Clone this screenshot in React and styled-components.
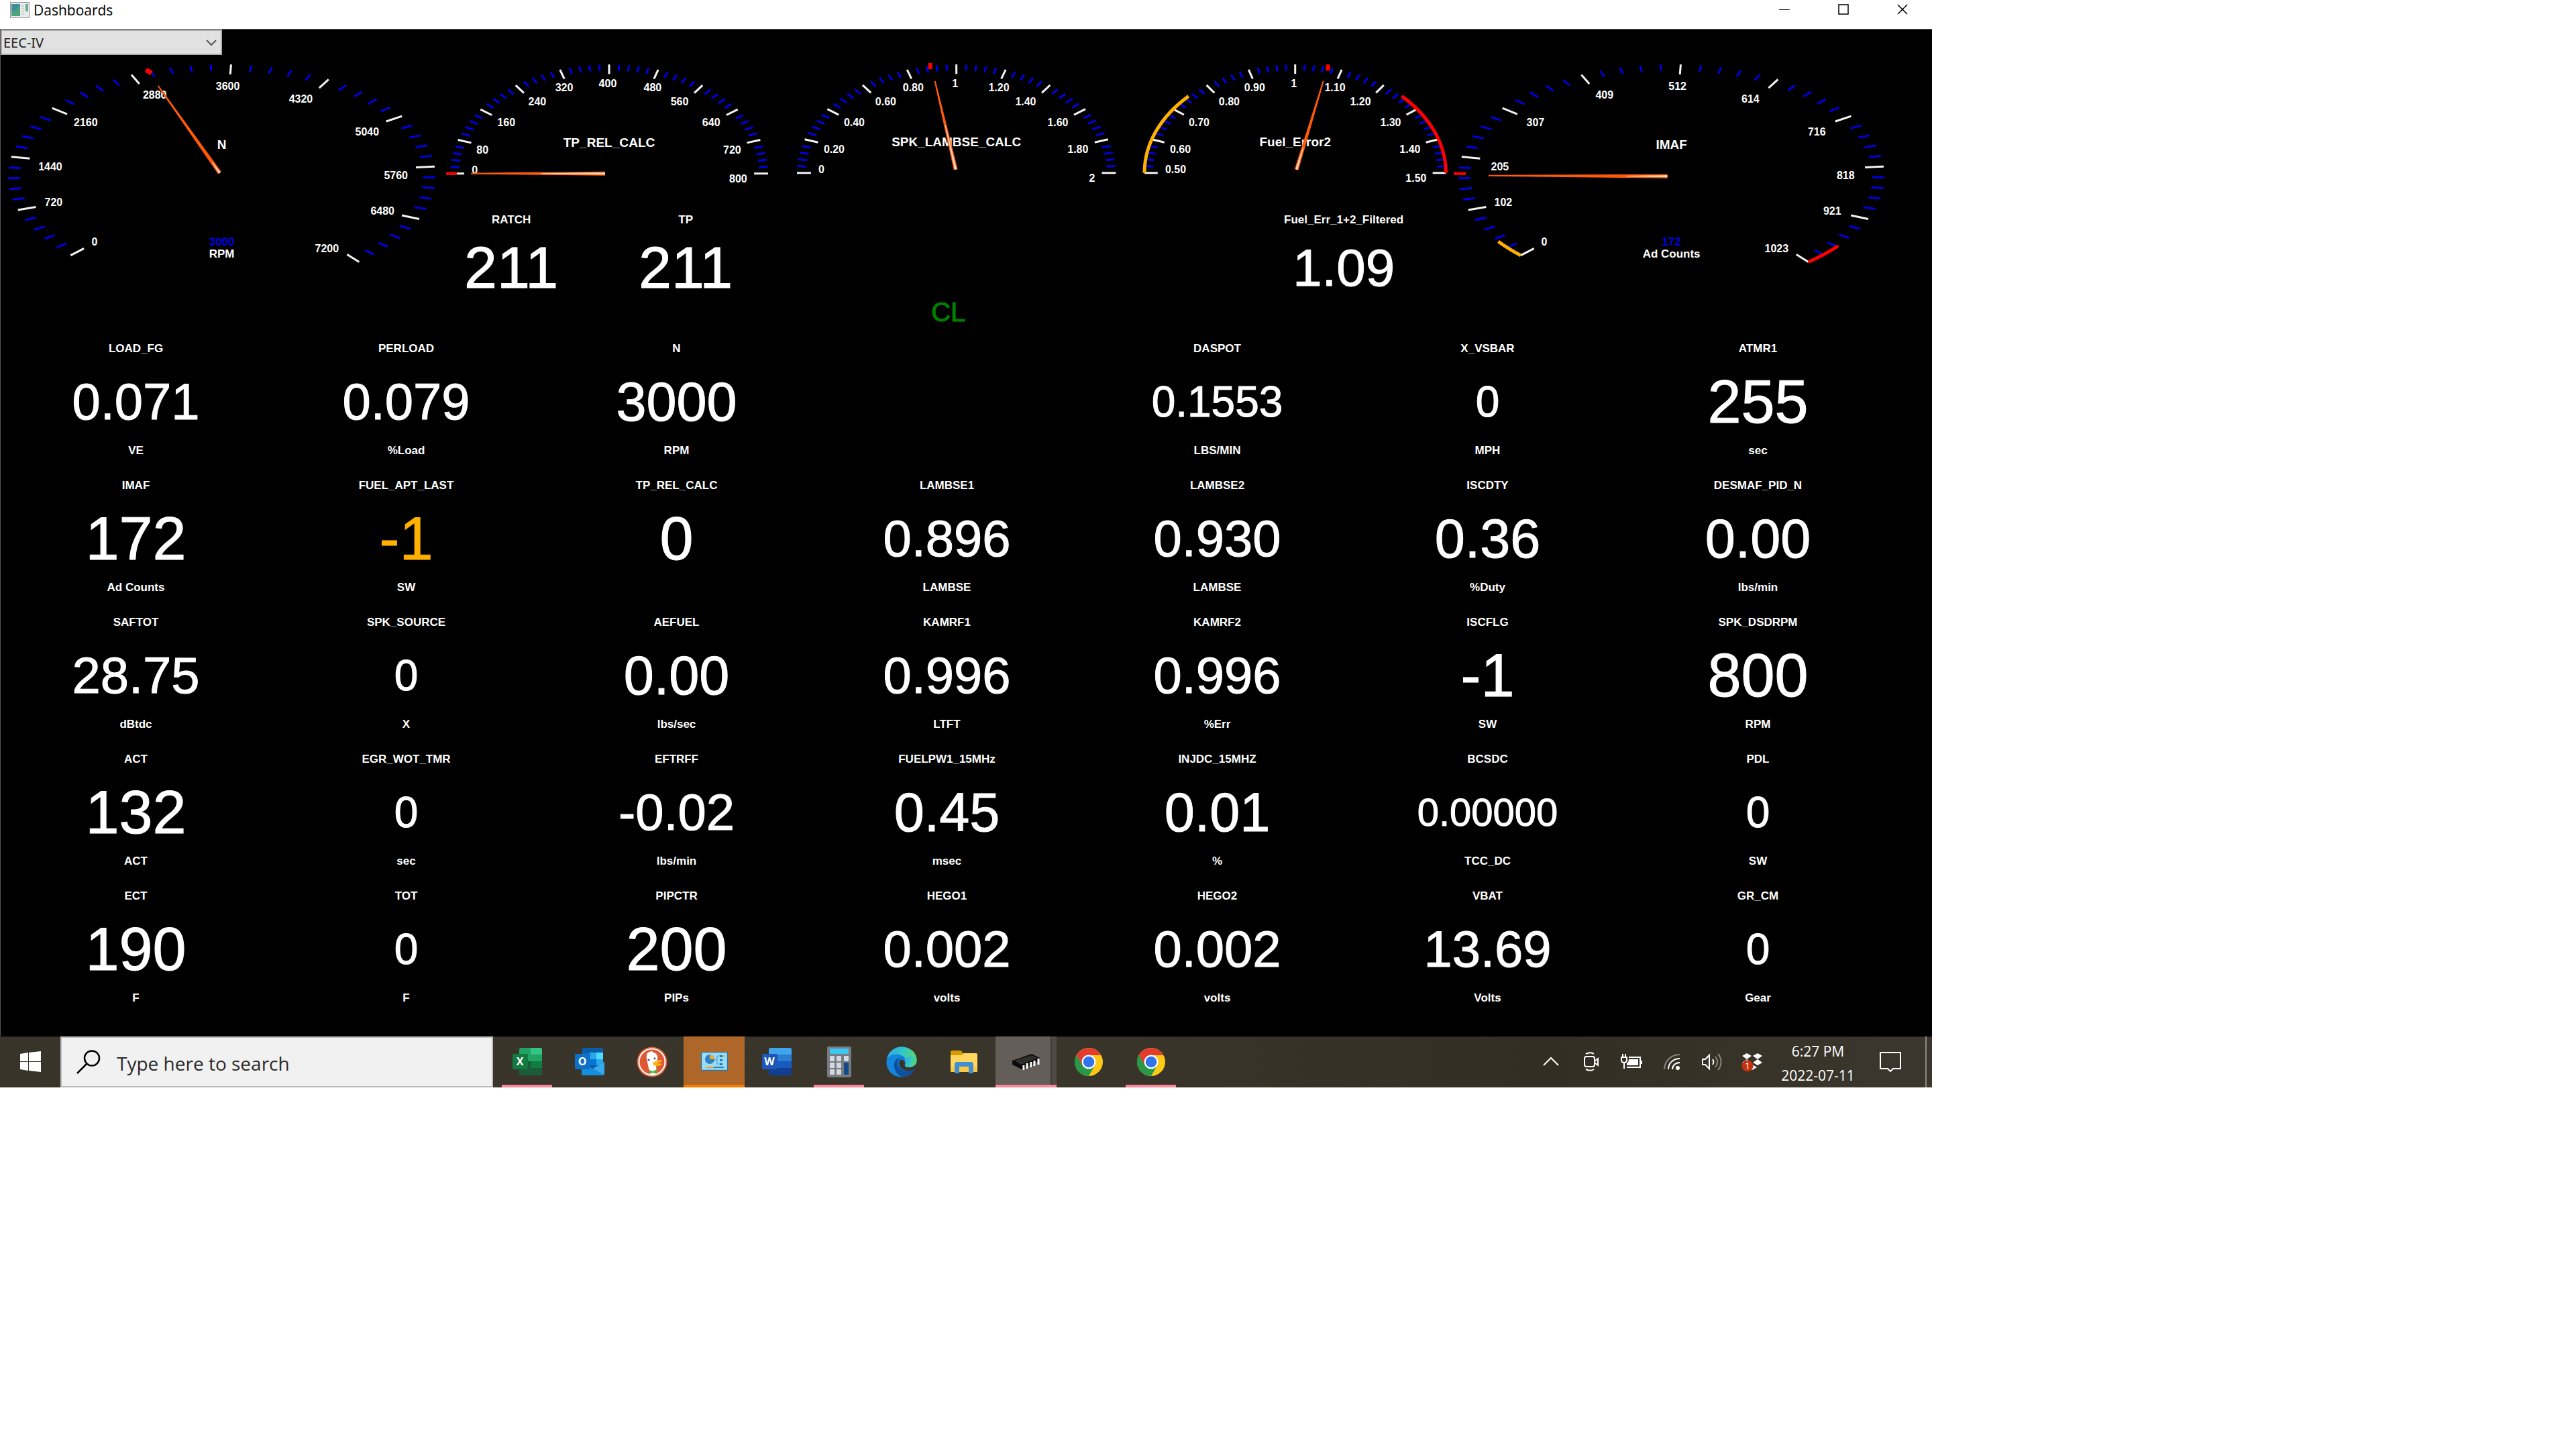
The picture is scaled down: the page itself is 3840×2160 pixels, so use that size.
import { useState } from "react";
import styled, { createGlobalStyle } from "styled-components";

const GlobalStyle = createGlobalStyle`
  * {
    box-sizing: border-box;
  }

  body {
    margin: 0;
    background: #fff;
  }
`;

const uiFont = `"Open Sans", "Noto Sans", sans-serif`;
const gaugeFont = `"Liberation Sans", Arial, sans-serif`;

const Desktop = styled.div`
  width: 75vw;
  font-family: ${uiFont};
`;

const TitleBar = styled.header`
  display: flex;
  align-items: flex-start;
  height: 43px;
  padding-left: 15px;
  background: #fff;
`;

const AppTitle = styled.h1`
  display: flex;
  align-items: center;
  gap: 6px;
  flex: 1;
  margin: 0;
  height: 30px;
  font-size: 21px;
  line-height: 30px;
  font-weight: 400;
  color: #000;
`;

const WindowButton = styled.button`
  display: flex;
  align-items: center;
  justify-content: center;
  width: 88px;
  height: 28px;
  padding: 0;
  border: 0;
  background: transparent;
  color: #000;
`;

const Dashboard = styled.main`
  padding-bottom: 48px;
  border-top: 1px solid #5a5f5a;
  border-left: 1px solid #555;
  background: #000;
  color: #fff;
  font-family: ${gaugeFont};
`;

const Picker = styled.div`
  position: relative;
  width: 330px;
  height: 38px;

  svg {
    position: absolute;
    top: 15px;
    right: 8px;
    pointer-events: none;
  }
`;

const PickerSelect = styled.select`
  width: 100%;
  height: 100%;
  padding: 0 32px 0 2px;
  appearance: none;
  border: 2px solid #adadad;
  border-radius: 0;
  background: #e1e1e1;
  color: #222;
  font-family: "Noto Sans", sans-serif;
  font-size: 20px;
`;

const GaugeRow = styled.section`
  display: grid;
  grid-template-columns: 662fr 494fr 538fr 472fr 656fr;
  grid-template-rows: auto 192px;
  margin-right: 58px;
`;

const GaugeCell = styled.div`
  grid-row: ${(p) => (p.$tall ? "1 / span 2" : "1")};
  min-width: 0;
`;

const GaugeSvg = styled.svg`
  display: block;
  width: 100%;
  height: auto;
  font-family: ${gaugeFont};
  font-weight: 700;
`;

const ReadoutStrip = styled.div`
  grid-row: 2;
  grid-column: ${(p) => p.$column};
  display: flex;
  justify-content: center;
  align-items: ${(p) => (p.$end ? "flex-end" : "flex-start")};
  gap: 60px;
  padding: ${(p) => p.$pad};
`;

const Readout = styled.div`
  width: 200px;
`;

const LoopState = styled.p`
  margin: 0;
  font-size: 40px;
  line-height: 48px;
  color: #008000;
  -webkit-text-stroke: 1px currentColor;
`;

const ReadingGrid = styled.section`
  display: grid;
  grid-template-columns: repeat(7, 1fr);
  row-gap: 32px;
  margin-right: 58px;
`;

const Reading = styled.div`
  min-width: 0;
`;

const Caption = styled.div`
  height: 20px;
  font-size: 17px;
  line-height: 22px;
  font-weight: 700;
  text-align: center;
  white-space: nowrap;
`;

const Value = styled.div`
  height: ${(p) => (p.$short ? "124px" : "132px")};
  padding-top: ${(p) => (p.$short ? "0" : "6px")};
  font-size: ${(p) => p.$size}px;
  line-height: ${(p) => (p.$short ? "124px" : "128px")};
  color: ${(p) => (p.$warn ? "#ffb000" : "#fff")};
  text-align: center;
  white-space: nowrap;
  -webkit-text-stroke: 1px currentColor;
`;

const Taskbar = styled.footer`
  display: flex;
  height: 76px;
  background: linear-gradient(90deg, #38342a, #3a352b 55%, #332e23 80%, #3b372e);
  box-shadow: inset 0 1px 0 #26221c;
`;

const StartButton = styled.button`
  display: flex;
  align-items: center;
  justify-content: center;
  width: 90px;
  padding: 0;
  border: 0;
  background: transparent;
`;

const SearchBox = styled.label`
  display: flex;
  align-items: center;
  gap: 24px;
  width: 645px;
  padding-left: 22px;
  border: 2px solid #bcbcbc;
  background: #f1f1f1;
`;

const SearchInput = styled.input`
  flex: 1;
  min-width: 0;
  padding: 4px 0 0;
  border: 0;
  outline: 0;
  background: transparent;
  font-family: ${uiFont};
  font-size: 28px;

  &::placeholder {
    color: #2b2b2b;
    opacity: 1;
  }
`;

const TaskList = styled.nav`
  display: flex;
  gap: 2px;
  flex: 1;
  margin-left: 5px;
`;

const taskBackground = {
  alert: "#ae6629",
  active: "linear-gradient(90deg, #635f58 82px, #3f3b35 82px 84px, #4f4a44 84px)",
};

const TaskButton = styled.button`
  position: relative;
  display: flex;
  align-items: center;
  justify-content: center;
  width: 91px;
  padding: 0;
  border: 0;
  background: ${(p) => taskBackground[p.$state] || "transparent"};

  &::after {
    content: "";
    position: absolute;
    right: ${(p) => (p.$state === "open" ? "8px" : "0")};
    bottom: 0;
    left: ${(p) => (p.$state === "open" ? "8px" : "0")};
    height: ${(p) => (p.$state ? "4px" : "0")};
    background: ${(p) => (p.$state === "alert" ? "#ff7b00" : "#ff8599")};
  }
`;

const Tray = styled.div`
  display: flex;
  align-items: stretch;
`;

const TrayButton = styled.button`
  display: flex;
  align-items: center;
  justify-content: center;
  width: ${(p) => (p.$wide ? "80px" : "60px")};
  padding: 0;
  border: 0;
  background: transparent;
  color: #fff;
`;

const Clock = styled.time`
  width: 136px;
  padding-top: 4px;
  color: #fff;
  font-size: 21px;
  line-height: 36px;
  text-align: center;
`;

const ShowDesktop = styled.button`
  width: 10px;
  margin-left: 12px;
  padding: 0;
  border: 0;
  border-left: 2px solid #8b8880;
  background: transparent;
`;

// Both dial shapes use degrees from 12 o'clock, clockwise.
const DIALS = {
  round: { start: -135, sweep: 275, ry: 167, cy: 181, height: 370, titleY: 133 },
  arc: { start: -90, sweep: 180, ry: 162, cy: 176, height: 234, titleY: 129 },
};

const ROUND_LABELS = [
  [-190, 98],
  [-251, 39],
  [-256, -14],
  [-203, -80],
  [-100, -121],
  [9, -134],
  [118, -115],
  [217, -66],
  [260, -1],
  [240, 52],
  [157, 108],
];

const ARC_LABELS = [
  [-0.864, -5],
  [-0.833, -35],
  [-0.705, -75],
  [-0.507, -106],
  [-0.337, -127],
  [-0.01, -133],
  [0.332, -127],
  [0.502, -106],
  [0.7, -75],
  [0.829, -35],
  [0.87, 8],
];

const GAUGES = [
  {
    title: "N",
    dial: "round",
    width: 662,
    cx: 330,
    rx: 319,
    labels: ["0", "720", "1440", "2160", "2880", "3600", "4320", "5040", "5760", "6480", "7200"],
    reading: "3000",
    unit: "RPM",
    needle: { tip: [-95, -135], base: [-3, -5], core: 0.12 },
    marker: { from: [-113, -159], to: [-105, -154], width: 7 },
  },
  {
    title: "TP_REL_CALC",
    dial: "arc",
    width: 494,
    cx: 245,
    rx: 236,
    labels: ["0", "80", "160", "240", "320", "400", "480", "560", "640", "720", "800"],
    needle: { tip: [-205, 0], base: [-6, 0], core: 0.48 },
    marker: { from: [-242, 0], to: [-226, 0], width: 4 },
  },
  {
    title: "SPK_LAMBSE_CALC",
    dial: "arc",
    width: 538,
    cx: 268,
    rx: 238,
    labels: ["0", "0.20", "0.40", "0.60", "0.80", "1", "1.20", "1.40", "1.60", "1.80", "2"],
    needle: { tip: [-32, -137], base: [-1, -5], core: 0.5 },
    marker: { from: [-39, -164], to: [-39, -155], width: 6 },
  },
  {
    title: "Fuel_Error2",
    dial: "arc",
    width: 472,
    cx: 236,
    rx: 225,
    labels: ["0.50", "0.60", "0.70", "0.80", "0.90", "1", "1.10", "1.20", "1.30", "1.40", "1.50"],
    needle: { tip: [42, -137], base: [2, -5], core: 0.25 },
    marker: { from: [49, -162], to: [49, -153], width: 6 },
    bands: [
      { from: 0, to: 0.25, color: "#ffb000" },
      { from: 0.75, to: 1, color: "#ff0000" },
    ],
  },
  {
    title: "IMAF",
    dial: "round",
    width: 656,
    cx: 325,
    rx: 318,
    labels: ["0", "102", "205", "307", "409", "512", "614", "716", "818", "921", "1023"],
    reading: "172",
    unit: "Ad Counts",
    needle: { tip: [-273, -1], base: [-6, 0], core: 0.23 },
    marker: { from: [-326, -4], to: [-307, -4], width: 4 },
    bands: [
      { from: 0, to: 0.034, color: "#ffb000" },
      { from: 0.958, to: 1, color: "#ff0000" },
    ],
  },
];

const XL = 90;
const LG = 81;
const MD = 76;
const SM = 64;
const XS = 58;

const READINGS = [
  { name: "LOAD_FG", value: "0.071", unit: "VE", size: MD },
  { name: "PERLOAD", value: "0.079", unit: "%Load", size: MD },
  { name: "N", value: "3000", unit: "RPM", size: LG },
  null,
  { name: "DASPOT", value: "0.1553", unit: "LBS/MIN", size: SM },
  { name: "X_VSBAR", value: "0", unit: "MPH", size: SM },
  { name: "ATMR1", value: "255", unit: "sec", size: XL },

  { name: "IMAF", value: "172", unit: "Ad Counts", size: XL },
  { name: "FUEL_APT_LAST", value: "-1", unit: "SW", size: XL, warn: true },
  { name: "TP_REL_CALC", value: "0", unit: "", size: XL },
  { name: "LAMBSE1", value: "0.896", unit: "LAMBSE", size: MD },
  { name: "LAMBSE2", value: "0.930", unit: "LAMBSE", size: MD },
  { name: "ISCDTY", value: "0.36", unit: "%Duty", size: LG },
  { name: "DESMAF_PID_N", value: "0.00", unit: "lbs/min", size: LG },

  { name: "SAFTOT", value: "28.75", unit: "dBtdc", size: MD },
  { name: "SPK_SOURCE", value: "0", unit: "X", size: SM },
  { name: "AEFUEL", value: "0.00", unit: "lbs/sec", size: LG },
  { name: "KAMRF1", value: "0.996", unit: "LTFT", size: MD },
  { name: "KAMRF2", value: "0.996", unit: "%Err", size: MD },
  { name: "ISCFLG", value: "-1", unit: "SW", size: XL },
  { name: "SPK_DSDRPM", value: "800", unit: "RPM", size: XL },

  { name: "ACT", value: "132", unit: "ACT", size: XL },
  { name: "EGR_WOT_TMR", value: "0", unit: "sec", size: SM },
  { name: "EFTRFF", value: "-0.02", unit: "lbs/min", size: MD },
  { name: "FUELPW1_15MHz", value: "0.45", unit: "msec", size: LG },
  { name: "INJDC_15MHZ", value: "0.01", unit: "%", size: LG },
  { name: "BCSDC", value: "0.00000", unit: "TCC_DC", size: XS },
  { name: "PDL", value: "0", unit: "SW", size: SM },

  { name: "ECT", value: "190", unit: "F", size: XL },
  { name: "TOT", value: "0", unit: "F", size: SM },
  { name: "PIPCTR", value: "200", unit: "PIPs", size: XL },
  { name: "HEGO1", value: "0.002", unit: "volts", size: MD },
  { name: "HEGO2", value: "0.002", unit: "volts", size: MD },
  { name: "VBAT", value: "13.69", unit: "Volts", size: MD },
  { name: "GR_CM", value: "0", unit: "Gear", size: SM },
];

function pointOn(gauge, fraction, scale) {
  const dial = DIALS[gauge.dial];
  const rad = ((dial.start + dial.sweep * fraction) * Math.PI) / 180;
  return [Math.sin(rad) * gauge.rx * scale, -Math.cos(rad) * dial.ry * scale];
}

function wedge(tip, base, half) {
  const dx = base[0] - tip[0];
  const dy = base[1] - tip[1];
  const len = Math.hypot(dx, dy);
  const nx = (-dy / len) * half;
  const ny = (dx / len) * half;
  return [
    [tip[0] - nx / 3, tip[1] - ny / 3],
    [tip[0] + nx / 3, tip[1] + ny / 3],
    [base[0] + nx, base[1] + ny],
    [base[0] - nx, base[1] - ny],
  ].join(" ");
}

function Gauge({ gauge }) {
  const dial = DIALS[gauge.dial];
  const round = gauge.dial === "round";
  const { tip, base, core } = gauge.needle;
  const coreTip = [base[0] + (tip[0] - base[0]) * core, base[1] + (tip[1] - base[1]) * core];

  return (
    <GaugeSvg viewBox={`0 0 ${gauge.width} ${dial.height}`} role="img" aria-label={gauge.title}>
      <g transform={`translate(${gauge.cx} ${dial.cy})`}>
        {Array.from({ length: 51 }, (_, i) => {
          const major = i % 5 === 0;
          const [x1, y1] = pointOn(gauge, i / 50, 1);
          const [x2, y2] = pointOn(gauge, i / 50, major ? 0.912 : 0.943);
          return (
            <line
              key={i}
              x1={x1}
              y1={y1}
              x2={x2}
              y2={y2}
              stroke={major ? "#f4f4f4" : "#0000e0"}
              strokeWidth={3}
            />
          );
        })}

        {gauge.bands?.map((band) => {
          const from = pointOn(gauge, band.from, 1);
          const to = pointOn(gauge, band.to, 1);
          return (
            <path
              key={band.color}
              d={`M${from} A${gauge.rx} ${dial.ry} 0 0 1 ${to}`}
              fill="none"
              stroke={band.color}
              strokeWidth={5}
            />
          );
        })}

        {gauge.labels.map((label, i) => {
          let [x, y] = round ? ROUND_LABELS[i] : ARC_LABELS[i];
          let anchor = "middle";
          if (!round) {
            x = Math.round(x * gauge.rx);
            if (i < 5) anchor = "start";
            if (i > 5) anchor = "end";
          }
          return (
            <text key={label} x={x} y={y + 5} textAnchor={anchor} fontSize="16" fill="#fff">
              {label}
            </text>
          );
        })}

        <text y={dial.titleY + 7 - dial.cy} textAnchor="middle" fontSize="19" fill="#fff">
          {gauge.title}
        </text>

        {round && (
          <>
            <text y="103" textAnchor="middle" fontSize="17" fill="#0000e0">
              {gauge.reading}
            </text>
            <text y="121" textAnchor="middle" fontSize="17" fill="#fff">
              {gauge.unit}
            </text>
          </>
        )}

        <line
          x1={gauge.marker.from[0]}
          y1={gauge.marker.from[1]}
          x2={gauge.marker.to[0]}
          y2={gauge.marker.to[1]}
          stroke="#ff0000"
          strokeWidth={gauge.marker.width}
        />
        <polygon points={wedge(tip, base, 3)} fill="#ff5a08" />
        <polygon points={wedge(coreTip, base, 1.5)} fill="#ffdcc8" />
      </g>
    </GaugeSvg>
  );
}

function DashboardIcon() {
  return (
    <svg width="29" height="24" viewBox="0 0 29 24" aria-hidden="true">
      <rect x="0.5" y="0.5" width="28" height="23" fill="#e9ebe9" stroke="#8f9794" />
      <rect x="2" y="3" width="13" height="18" fill="#4fa27e" />
      <path d="M2 3h13c-4 8-8 11-13 11z" fill="#3f8f9c" />
      <path d="M17 6h4M17 10h4M17 14h4M17 18h4" stroke="#b5b9b7" />
      <rect x="23" y="3" width="4" height="11" fill="#68ab8d" />
    </svg>
  );
}

function OfficeIcon({ letter, tones, badge }) {
  return (
    <svg width="46" height="44" viewBox="0 0 46 44" aria-hidden="true">
      <rect x="11" y="1" width="34" height="41" rx="3" fill={tones[2]} />
      <path d="M14 1h28a3 3 0 0 1 3 3v7H11V4a3 3 0 0 1 3-3z" fill={tones[0]} />
      <rect x="11" y="11" width="34" height="10" fill={tones[1]} />
      <path d="M11 31h34v8a3 3 0 0 1-3 3H14a3 3 0 0 1-3-3z" fill={tones[3]} />
      {letter === "X" && <path d="M28 1h14a3 3 0 0 1 3 3v7H28z" fill="#33c481" />}
      {letter === "X" && <path d="M11 21h17v10H11z" fill="#185c37" />}
      <rect x="1" y="10" width="23" height="23" rx="2" fill={badge} />
      <text x="12" y="27" textAnchor="middle" fontFamily="Open Sans" fontWeight="700" fontSize="16" fill="#fff">
        {letter}
      </text>
    </svg>
  );
}

function OutlookIcon() {
  return (
    <svg width="46" height="44" viewBox="0 0 46 44" aria-hidden="true">
      <rect x="12" y="1" width="31" height="30" rx="2" fill="#0a5da8" />
      <path d="M12 8h11v10H12z" fill="#0f6cbd" />
      <path d="M23 8h10v10H23z" fill="#28a8ea" />
      <path d="M33 8h10v10H33z" fill="#50d9ff" />
      <path d="M23 18h10v9H23z" fill="#0078d4" />
      <path d="M33 18h10v9H33z" fill="#28a8ea" />
      <path d="M11 23l17 9 17-10v17a3 3 0 0 1-3 3H14a3 3 0 0 1-3-3z" fill="#1490df" />
      <path d="M45 22v17a3 3 0 0 1-1 2L28 32z" fill="#37a9ee" />
      <rect x="1" y="10" width="23" height="23" rx="2" fill="#0f6fc9" />
      <text x="12" y="27" textAnchor="middle" fontFamily="Open Sans" fontWeight="700" fontSize="16" fill="#fff">
        O
      </text>
    </svg>
  );
}

function DuckIcon() {
  return (
    <svg width="46" height="46" viewBox="0 0 46 46" aria-hidden="true">
      <circle cx="23" cy="23" r="22.5" fill="#de5833" />
      <circle cx="23" cy="23" r="19.5" fill="#de5833" stroke="#fff" strokeWidth="2" />
      <path d="M20 42c-1-7-4-17-5-24-1-6 1-10 5-10 1-2 4-1 5 1 5 1 7 5 6 10l-2 8 1 15c-3 1-7 1-10 0z" fill="#fff" />
      <path d="M24 24c3-2 7-3 12-4 2 0 2 2 0 3l-5 2c2 1 5 0 6 1s-3 3-6 3c-4 0-8-2-7-5z" fill="#fdb813" />
      <circle cx="18" cy="20" r="1.6" fill="#2d4f8e" />
      <circle cx="27" cy="18" r="1.4" fill="#2d4f8e" />
      <path d="M19 35l5 2 6-3v7l-6-2-5 2z" fill="#56b549" />
    </svg>
  );
}

function ControlPanelIcon() {
  return (
    <svg width="40" height="29" viewBox="0 0 40 29" aria-hidden="true">
      <rect x="0.5" y="0.5" width="39" height="27" fill="#7bc8f0" stroke="#2279ae" />
      <rect x="2" y="2" width="36" height="23" fill="#9bdcf8" />
      <circle cx="13" cy="11" r="7" fill="#2d80c3" />
      <path d="M13 11V4a7 7 0 0 1 7 7z" fill="#f6a821" />
      <path d="M20 12h4V6h4M24 12v6h4" fill="none" stroke="#4a9cc7" />
      <path d="M28 5h4v3h-4zM28 11h4v3h-4zM28 17h4v3h-4z" fill="#2478b5" />
      <path d="M33 5h2v3h-2z" fill="#f6a821" />
      <path d="M7 23h12" stroke="#e9a13a" strokeWidth="2" />
      <path d="M19 23h15" stroke="#2f83b5" strokeWidth="2" />
    </svg>
  );
}

function CalculatorIcon() {
  return (
    <svg width="36" height="46" viewBox="0 0 36 46" aria-hidden="true">
      <rect width="36" height="46" rx="2" fill="#777c82" />
      <rect x="4" y="3" width="28" height="8" rx="1" fill="#3cc7f2" />
      {[14, 24, 34].map((y) =>
        [4, 14, 25].map((x) =>
          x === 25 && y > 14 ? null : (
            <rect key={`${x}-${y}`} x={x} y={y} width="7" height="8" rx="1" fill="#d2d9e1" />
          )
        )
      )}
      <rect x="25" y="24" width="7" height="18" rx="1" fill="#124a8c" />
    </svg>
  );
}

function EdgeIcon() {
  return (
    <svg width="46" height="46" viewBox="0 0 46 46" aria-hidden="true">
      <defs>
        <linearGradient id="edgeTop" x1="0" y1="0.3" x2="1" y2="0.6">
          <stop offset="0" stopColor="#2fa8e4" />
          <stop offset="0.5" stopColor="#33c8c8" />
          <stop offset="1" stopColor="#62dc54" />
        </linearGradient>
      </defs>
      <circle cx="23" cy="23" r="22.5" fill="#0f7bd6" />
      <path d="M1 19C3 8 12 0.5 23 0.5c13 0 22.5 9 22.5 19C45.5 27 40 31 34 31c-5 0-7-2-6-4 3-5 1-12-6-14C13 10 5 13 1 19z" fill="url(#edgeTop)" />
      <path d="M1 20c6-10 18-11 24-4-8-1-14 6-13 14 1 8 7 14 14 15C10 47-1 35 1 20z" fill="#1287dc" />
      <path d="M12 30c-1-7 3-12 9-14-5 5-5 12-1 16 5 5 15 6 23 1-4 7-10 12-18 12-7-1-12-7-13-15z" fill="#0e4f9e" />
      <path d="M28 27c-1 2 1 4 6 4 5 0 9-2 12-6 1 3 0 6-3 8-7 5-16 4-21-1-3-4-4-8-1-12 4-1 8 2 7 7z" fill="#38342a" />
      <path d="M27 19c2 4 2 6 1 8-1 2 1 4 6 4 6 0 11-4 11.5-11C45 14 38 12 27 19z" fill="url(#edgeTop)" />
    </svg>
  );
}

function FolderIcon() {
  return (
    <svg width="40" height="34" viewBox="0 0 40 34" aria-hidden="true">
      <path d="M0 2a2 2 0 0 1 2-2h13l4 4v5H0z" fill="#d99a00" />
      <path d="M0 7h16l4-3h18a2 2 0 0 1 2 2v26H0z" fill="#ffd75e" />
      <path d="M0 24h40v8H0z" fill="#fbc944" />
      <path d="M6 34V21a4 4 0 0 1 4-4h20a4 4 0 0 1 4 4v13h-7V24H13v10z" fill="#3f8fd2" />
    </svg>
  );
}

function ChipIcon() {
  return (
    <svg width="44" height="26" viewBox="0 0 44 26" aria-hidden="true">
      <path d="M1 11L30 1l12 6-1 5-26 12-14-7z" fill="#0b0b0b" />
      <path d="M4 11L30 3l9 4-25 10z" fill="#2e2f2a" />
      <path d="M18 18v7M23 15v8M29 13v8M34 11v8M40 8v9" stroke="#fff" strokeWidth="3" />
      <path d="M20 18v7M26 15v8M31 13v8M37 11v7" stroke="#333" strokeWidth="1" />
    </svg>
  );
}

function ChromeIcon() {
  return (
    <svg width="42" height="42" viewBox="0 0 42 42" aria-hidden="true">
      <circle cx="21" cy="21" r="21" fill="#ffc817" />
      <path d="M2.8 10.5A21 21 0 0 0 21 42l9.2-16L12 26z" fill="#279847" />
      <path d="M2.8 10.5A21 21 0 0 1 39.2 11H21l-9.2 15.5z" fill="#e33b2e" />
      <circle cx="21" cy="21" r="10.5" fill="#fff" />
      <circle cx="21" cy="21" r="8.3" fill="#2f74eb" />
    </svg>
  );
}

const TASKS = [
  {
    name: "Excel",
    state: "open",
    icon: <OfficeIcon letter="X" badge="#12793f" tones={["#21a366", "#21a366", "#107c41", "#1a5c38"]} />,
  },
  { name: "Outlook", icon: <OutlookIcon /> },
  { name: "DuckDuckGo", icon: <DuckIcon /> },
  { name: "Control Panel", state: "alert", icon: <ControlPanelIcon /> },
  {
    name: "Word",
    icon: <OfficeIcon letter="W" badge="#1b56b8" tones={["#41a5ee", "#2b7cd3", "#185abd", "#103f91"]} />,
  },
  { name: "Calculator", state: "open", icon: <CalculatorIcon /> },
  { name: "Edge", icon: <EdgeIcon /> },
  { name: "File Explorer", icon: <FolderIcon /> },
  { name: "Dashboards", state: "active", icon: <ChipIcon /> },
  { name: "Chrome", icon: <ChromeIcon /> },
  { name: "Chrome window", state: "open", icon: <ChromeIcon /> },
];

const TRAY = [
  {
    name: "Show hidden icons",
    icon: (
      <svg width="24" height="22" viewBox="0 0 24 22" fill="none" stroke="#fff" strokeWidth="2">
        <path d="M1 16L12 5l11 11" />
      </svg>
    ),
  },
  {
    name: "Meet Now",
    icon: (
      <svg width="24" height="30" viewBox="0 0 24 30" fill="none" stroke="#fff" strokeWidth="2">
        <rect x="2" y="7" width="15" height="15" rx="3" />
        <path d="M17 14l5-4v10l-5-4M4 3c4-2 9-2 12 0M4 26c4 2 9 2 12 0" />
      </svg>
    ),
  },
  {
    name: "Battery",
    icon: (
      <svg width="32" height="26" viewBox="0 0 32 26" fill="none" stroke="#fff" strokeWidth="2">
        <path d="M3 1v5M7 1v5M5 14v9M12 6h17v15H9M31 11v5" />
        <path d="M1 6h8v4c0 3-2 4-4 4s-4-1-4-4z" />
        <path d="M12 9h14v9H9v-3c2-1 3-3 3-6z" fill="#fff" stroke="none" />
      </svg>
    ),
  },
  {
    name: "Network",
    icon: (
      <svg width="26" height="26" viewBox="0 0 26 26" fill="none" stroke="#fff" strokeWidth="2">
        <path d="M2 24C2 12 12 2 25 2" stroke="#8a867f" />
        <path d="M8 24C8 15 15 8 25 8M14 24c0-6 5-10 11-10" />
        <circle cx="22" cy="22" r="3" fill="#fff" stroke="none" />
      </svg>
    ),
  },
  {
    name: "Volume",
    icon: (
      <svg width="32" height="28" viewBox="0 0 32 28" fill="none" stroke="#fff" strokeWidth="2">
        <path d="M2 10h4l6-6v20l-6-6H2zM17 10c2 3 2 5 0 8" />
        <path d="M21 6c4 5 4 11 0 16M25 2c6 7 6 17 0 24" stroke="#8a867f" />
      </svg>
    ),
  },
  {
    name: "Dropbox",
    icon: (
      <svg width="32" height="30" viewBox="0 0 32 30">
        <path d="M8 2l7 4-7 5-7-5zM24 2l7 4-7 5-7-5zM24 11l7 5-7 4-7-4zM8 11l7 5-7 4-7-4zM16 19l7 4-7 4-6-4z" fill="#fff" />
        <circle cx="9" cy="21" r="8.5" fill="#c5300f" />
        <text x="9" y="26" textAnchor="middle" fontFamily="Open Sans" fontSize="14" fill="#fff">
          1
        </text>
      </svg>
    ),
  },
];

function App() {
  const [profile, setProfile] = useState("EEC-IV");
  const [query, setQuery] = useState("");

  return (
    <Desktop>
      <GlobalStyle />
      <TitleBar>
        <AppTitle>
          <DashboardIcon />
          Dashboards
        </AppTitle>
        <WindowButton aria-label="Minimize">
          <svg width="16" height="16" viewBox="0 0 16 16">
            <path d="M0 8.5h16" stroke="currentColor" strokeWidth="1" />
          </svg>
        </WindowButton>
        <WindowButton aria-label="Maximize">
          <svg width="16" height="16" viewBox="0 0 16 16">
            <rect x="1" y="1" width="14" height="14" fill="none" stroke="currentColor" strokeWidth="1.5" />
          </svg>
        </WindowButton>
        <WindowButton aria-label="Close">
          <svg width="16" height="16" viewBox="0 0 16 16">
            <path d="M1 1l14 14M15 1L1 15" stroke="currentColor" strokeWidth="1.5" />
          </svg>
        </WindowButton>
      </TitleBar>

      <Dashboard>
        <Picker>
          <PickerSelect
            aria-label="Dashboard"
            value={profile}
            onChange={(e) => setProfile(e.target.value)}
          >
            <option>EEC-IV</option>
          </PickerSelect>
          <svg width="16" height="10" viewBox="0 0 16 10" aria-hidden="true">
            <path d="M1 1l7 7 7-7" fill="none" stroke="#555" strokeWidth="2" />
          </svg>
        </Picker>

        <GaugeRow>
          {GAUGES.map((gauge) => (
            <GaugeCell key={gauge.title} $tall={gauge.dial === "round"}>
              <Gauge gauge={gauge} />
            </GaugeCell>
          ))}
          <ReadoutStrip $column={2} $pad="0 36px 0 0">
            <Readout>
              <Caption>RATCH</Caption>
              <Value $size={88} $short>211</Value>
            </Readout>
            <Readout>
              <Caption>TP</Caption>
              <Value $size={88} $short>211</Value>
            </Readout>
          </ReadoutStrip>
          <ReadoutStrip $column={3} $end $pad="0 26px 20px 0">
            <LoopState>CL</LoopState>
          </ReadoutStrip>
          <ReadoutStrip $column={4} $pad="0 0 0 144px">
            <Readout>
              <Caption>Fuel_Err_1+2_Filtered</Caption>
              <Value $size={78} $short>1.09</Value>
            </Readout>
          </ReadoutStrip>
        </GaugeRow>

        <ReadingGrid>
          {READINGS.map((item, i) =>
            item ? (
              <Reading key={i}>
                <Caption>{item.name}</Caption>
                <Value $size={item.size} $warn={item.warn}>
                  {item.value}
                </Value>
                <Caption>{item.unit}</Caption>
              </Reading>
            ) : (
              <Reading key={i} />
            )
          )}
        </ReadingGrid>
      </Dashboard>

      <Taskbar>
        <StartButton aria-label="Start">
          <svg width="31" height="31" viewBox="0 0 31 31" fill="#fff">
            <path d="M0 4l12-2v13H0zM13 2l18-2v15H13zM0 16h12v13L0 27zM13 16h18v15l-18-2z" />
          </svg>
        </StartButton>
        <SearchBox>
          <svg width="36" height="36" viewBox="0 0 36 36" fill="none" stroke="#000" strokeWidth="2.5">
            <circle cx="23" cy="12.5" r="11" />
            <path d="M15 21L1 35" />
          </svg>
          <SearchInput
            type="text"
            aria-label="Search"
            placeholder="Type here to search"
            value={query}
            onChange={(e) => setQuery(e.target.value)}
          />
        </SearchBox>
        <TaskList>
          {TASKS.map((task) => (
            <TaskButton key={task.name} aria-label={task.name} $state={task.state}>
              {task.icon}
            </TaskButton>
          ))}
        </TaskList>
        <Tray>
          {TRAY.map((item) => (
            <TrayButton key={item.name} aria-label={item.name}>
              {item.icon}
            </TrayButton>
          ))}
          <Clock>
            6:27 PM
            <br />
            2022-07-11
          </Clock>
          <TrayButton aria-label="Notifications" $wide>
            <svg width="32" height="32" viewBox="0 0 32 32" fill="none" stroke="#fff" strokeWidth="2">
              <path d="M1 2h30v24H20l-4 4-4-4H1z" />
            </svg>
          </TrayButton>
          <ShowDesktop aria-label="Show desktop" />
        </Tray>
      </Taskbar>
    </Desktop>
  );
}

export default App;
